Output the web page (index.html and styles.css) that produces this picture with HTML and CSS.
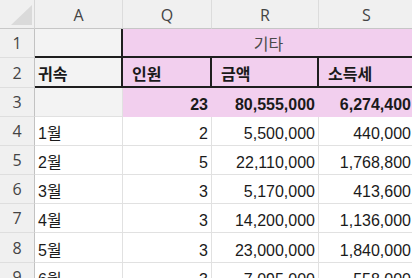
FILE: index.html
```html
<!DOCTYPE html>
<html lang="ko">
<head>
<meta charset="utf-8">
<title>Sheet</title>
<link rel="stylesheet" href="styles.css">
</head>
<body>
<div class="sheet">
  <div class="corner"><span class="tri"></span></div>
  <div class="colhead">A</div>
  <div class="colhead">Q</div>
  <div class="colhead">R</div>
  <div class="colhead">S</div>

  <div class="rowhead">1</div>
  <div class="cell shade bb br"></div>
  <div class="cell pink bb merged center">기타</div>

  <div class="rowhead">2</div>
  <div class="cell shade bb br bold">귀속</div>
  <div class="cell pink bb br bold indent">인원</div>
  <div class="cell pink bb br bold indent">금액</div>
  <div class="cell pink bb bold indent">소득세</div>

  <div class="rowhead">3</div>
  <div class="cell shade"></div>
  <div class="cell pink num bold">23</div>
  <div class="cell pink num bold">80,555,000</div>
  <div class="cell pink num bold">6,274,400</div>

  <div class="rowhead">4</div>
  <div class="cell">1월</div>
  <div class="cell num">2</div>
  <div class="cell num">5,500,000</div>
  <div class="cell num">440,000</div>

  <div class="rowhead">5</div>
  <div class="cell">2월</div>
  <div class="cell num">5</div>
  <div class="cell num">22,110,000</div>
  <div class="cell num">1,768,800</div>

  <div class="rowhead">6</div>
  <div class="cell">3월</div>
  <div class="cell num">3</div>
  <div class="cell num">5,170,000</div>
  <div class="cell num">413,600</div>

  <div class="rowhead">7</div>
  <div class="cell">4월</div>
  <div class="cell num">3</div>
  <div class="cell num">14,200,000</div>
  <div class="cell num">1,136,000</div>

  <div class="rowhead">8</div>
  <div class="cell">5월</div>
  <div class="cell num">3</div>
  <div class="cell num">23,000,000</div>
  <div class="cell num">1,840,000</div>

  <div class="rowhead">9</div>
  <div class="cell">6월</div>
  <div class="cell num">3</div>
  <div class="cell num">7,095,000</div>
  <div class="cell num">558,000</div>
</div>
</body>
</html>
```
FILE: styles.css
```css
html, body {
  margin: 0;
  padding: 0;
  background: #ffffff;
  overflow: hidden;
}

.sheet {
  display: grid;
  grid-template-columns: 35px 88px 89px 107px 96px;
  grid-template-rows: 29px 29px 30px 29px 29px 29px 29px 29px 30px 29px;
  width: 415px;
  font-family: "Liberation Sans", "Noto Sans CJK KR", sans-serif;
  font-size: 16px;
  color: #1a1a1a;
}

.corner {
  box-sizing: border-box;
  background: #f0f0f0;
  border-right: 1px solid #d6d6d6;
  border-bottom: 1px solid #c8c8c8;
  display: flex;
  justify-content: flex-end;
  align-items: flex-end;
  padding: 0 2px 3px 0;
}

.tri {
  width: 0;
  height: 0;
  border-left: 21px solid transparent;
  border-bottom: 20px solid #dadada;
}

.colhead {
  box-sizing: border-box;
  background: #f0f0f0;
  border-right: 1px solid #dcdcdc;
  border-bottom: 1px solid #c6c6c6;
  color: #444444;
  font-family: "Open Sans", "Liberation Sans", sans-serif;
  font-size: 16px;
  display: flex;
  align-items: center;
  justify-content: center;
  padding-top: 1px;
}

.rowhead {
  box-sizing: border-box;
  background: #f0f0f0;
  border-right: 1px solid #c2c2c2;
  border-bottom: 1px solid #dedede;
  color: #444444;
  font-family: "Open Sans", "Liberation Sans", sans-serif;
  font-size: 16px;
  display: flex;
  align-items: center;
  justify-content: center;
}

.cell {
  box-sizing: border-box;
  border-right: 1px solid #e1e1e1;
  border-bottom: 1px solid #e1e1e1;
  display: flex;
  align-items: flex-end;
  padding: 0 3px 2px 3px;
  line-height: 18px;
  white-space: nowrap;
}

.shade {
  background: #f3f3f3;
}

.pink {
  background: #f2cfee;
  border-right-color: #f2cfee;
  border-bottom-color: #f2cfee;
}

.bb {
  border-bottom: 2px solid #1e1e1e;
}

.br {
  border-right: 2px solid #1e1e1e;
}

.merged {
  grid-column: span 3;
  color: #4a4a4a;
}

.center {
  justify-content: center;
}

.indent {
  padding-left: 9px;
}

.bold {
  font-weight: bold;
}

.num {
  justify-content: flex-end;
}
```
